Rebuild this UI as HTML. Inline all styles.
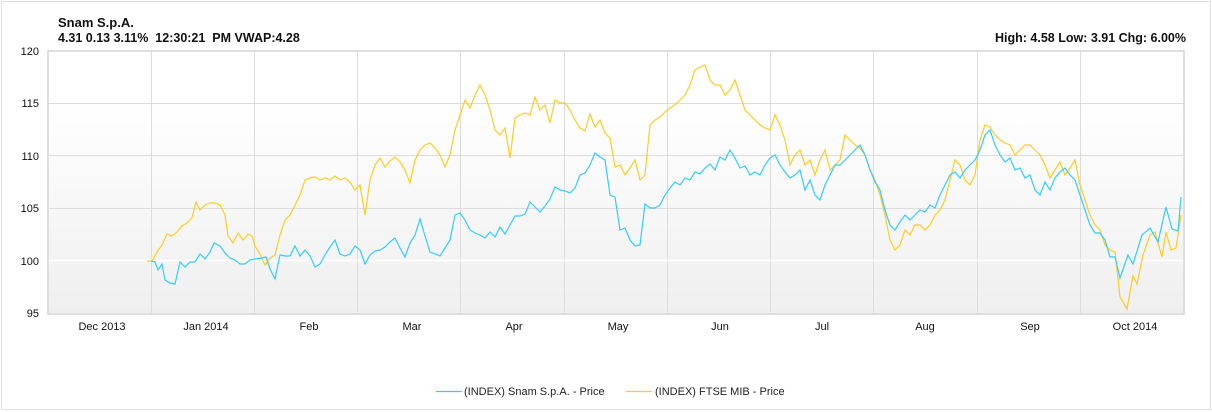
<!DOCTYPE html>
<html><head><meta charset="utf-8"><style>
body{margin:0;background:#fff;font-family:"Liberation Sans",Arial,sans-serif}
svg{display:block}
</style></head><body>
<svg width="1212" height="412" xmlns="http://www.w3.org/2000/svg" font-family="Liberation Sans, Arial, sans-serif">
<defs><linearGradient id="g" x1="0" y1="0" x2="0" y2="1"><stop offset="0" stop-color="#ffffff"/><stop offset="0.2" stop-color="#ffffff"/><stop offset="1" stop-color="#efefef"/></linearGradient></defs>
<rect x="1.5" y="1.5" width="1209" height="408" fill="#fff" stroke="#e2e2e2"/>
<text x="58" y="27" font-size="13" font-weight="bold" fill="#111">Snam S.p.A.</text>
<text x="58" y="42" font-size="12.5" font-weight="bold" fill="#111" style="white-space:pre" xml:space="preserve">4.31 0.13 3.11%  12:30:21  PM VWAP:4.28</text>
<text x="1186" y="42" font-size="12.5" font-weight="bold" fill="#111" text-anchor="end">High: 4.58 Low: 3.91 Chg: 6.00%</text>
<rect x="48" y="51" width="1135" height="262" fill="url(#g)"/>
<g stroke="#dcdcdc" stroke-width="1">
<line x1="48" y1="103.5" x2="1183" y2="103.5"/><line x1="48" y1="155.5" x2="1183" y2="155.5"/><line x1="48" y1="208.5" x2="1183" y2="208.5"/>
<line x1="151.5" y1="51" x2="151.5" y2="313"/><line x1="254.5" y1="51" x2="254.5" y2="313"/><line x1="357.5" y1="51" x2="357.5" y2="313"/><line x1="460.5" y1="51" x2="460.5" y2="313"/><line x1="564.5" y1="51" x2="564.5" y2="313"/><line x1="667.5" y1="51" x2="667.5" y2="313"/><line x1="770.5" y1="51" x2="770.5" y2="313"/><line x1="873.5" y1="51" x2="873.5" y2="313"/><line x1="977.5" y1="51" x2="977.5" y2="313"/><line x1="1080.5" y1="51" x2="1080.5" y2="313"/>
</g>
<line x1="48" y1="260.5" x2="1183" y2="260.5" stroke="#fff" stroke-width="1.5"/>
<g stroke="#dedede" stroke-width="2" fill="none">
<line x1="48" y1="51" x2="1184" y2="51"/><line x1="48" y1="50" x2="48" y2="314"/><line x1="47" y1="314" x2="1185" y2="314"/><line x1="1184" y1="50" x2="1184" y2="314"/>
</g>
<g font-size="11" fill="#111" text-anchor="end">
<text x="39" y="55">120</text><text x="39" y="107">115</text><text x="39" y="160">110</text><text x="39" y="212">105</text><text x="39" y="265">100</text><text x="39" y="317">95</text>
</g>
<g font-size="11" fill="#111" text-anchor="middle">
<text x="102" y="330">Dec 2013</text><text x="206" y="330">Jan 2014</text><text x="309" y="330">Feb</text><text x="412" y="330">Mar</text><text x="514" y="330">Apr</text><text x="618" y="330">May</text><text x="720" y="330">Jun</text><text x="822" y="330">Jul</text><text x="925" y="330">Aug</text><text x="1030" y="330">Sep</text><text x="1135" y="330">Oct 2014</text>
</g>
<polyline fill="none" stroke="#ffcc22" stroke-width="1.2" points="147,261 152,261 157,252 162,245 167,234 172,236 177,232 182,226 187,223 192,218 196,202 200,210 205,205 210,203 215,203 220,205 225,215 228,236 233,243 238,233 243,240 248,234 252,236 255,246 260,254 265,265 270,258 275,255 280,235 285,220 290,215 295,205 300,195 305,180 310,178 315,177 320,180 325,178 330,180 335,176 340,180 345,178 350,182 355,190 360,185 365,215 370,180 375,165 380,158 385,167 390,161 395,157 400,162 405,170 410,183 415,160 420,150 425,145 430,143 435,148 440,155 445,167 450,155 455,130 460,115 465,100 470,108 475,95 480,85 485,95 490,110 495,130 500,135 505,128 510,158 515,118 520,115 525,113 530,115 535,97 540,110 545,105 550,123 555,100 560,103 565,103 570,110 575,120 580,128 585,131 590,114 595,127 600,120 605,133 610,138 615,167 620,165 625,175 630,168 635,160 640,180 645,175 650,125 655,120 660,117 665,112 670,108 675,105 680,100 685,95 690,85 695,70 700,67 705,65 710,80 715,85 720,85 725,95 730,90 735,80 740,95 745,110 750,115 755,120 760,125 765,128 770,130 775,115 780,125 785,140 790,165 795,155 800,150 805,165 810,160 815,175 820,160 825,150 830,170 835,165 840,160 845,135 850,140 855,145 860,148 865,155 870,170 875,180 880,195 885,215 890,240 895,250 900,245 905,230 910,235 915,225 920,225 925,230 930,225 935,215 940,210 945,200 950,180 955,160 960,165 965,180 970,185 975,175 980,140 985,125 990,127 995,135 1000,140 1005,143 1010,145 1015,155 1020,150 1025,145 1030,145 1035,150 1040,155 1045,165 1050,178 1055,170 1060,162 1065,175 1070,168 1075,160 1080,185 1085,200 1090,215 1095,225 1100,230 1105,245 1110,250 1115,252 1120,297 1127,309 1133,276 1137,284 1143,255 1150,235 1155,232 1162,257 1166,232 1171,250 1176,248 1181,215"/>
<polyline fill="none" stroke="#33ccff" stroke-width="1.2" points="151,261 155,262 158,270 162,264 165,280 170,283 175,284 180,262 185,267 190,262 195,262 200,254 205,259 210,252 214,243 220,246 225,253 230,258 235,260 240,264 245,264 250,260 255,259 262,258 266,257 270,269 275,279 280,255 285,256 290,256 295,246 300,256 305,250 310,256 315,267 320,264 325,255 330,247 335,240 340,254 345,256 350,254 355,246 360,250 365,264 370,255 375,251 380,250 385,247 390,242 395,238 400,248 405,257 410,243 415,235 420,219 425,236 430,252 435,254 440,256 445,248 450,240 455,215 460,213 465,220 470,230 475,233 480,235 485,238 490,232 495,237 500,227 505,234 510,225 515,216 520,216 525,214 530,202 535,207 540,212 545,206 550,199 555,187 560,190 565,191 570,193 575,188 580,175 585,173 590,165 595,153 600,157 605,160 610,195 615,197 620,230 625,228 630,240 635,246 640,245 645,204 650,208 655,208 660,205 665,195 670,188 675,182 680,185 685,178 690,180 695,172 700,174 705,168 710,164 715,170 720,157 725,160 730,150 735,158 740,168 745,166 750,175 755,172 760,175 765,165 770,158 775,155 780,165 785,172 790,178 795,175 800,170 805,190 810,180 815,195 820,200 825,185 830,175 835,165 840,165 845,160 850,155 855,150 860,145 865,155 870,170 875,182 880,190 885,210 890,225 895,230 900,222 905,215 910,220 915,215 920,210 925,212 930,205 935,208 940,195 945,185 950,175 955,172 960,178 965,170 970,165 975,160 980,150 985,135 990,130 995,145 1000,155 1005,162 1010,158 1015,170 1020,168 1025,178 1030,175 1035,190 1040,195 1045,182 1050,190 1055,178 1060,172 1065,168 1070,175 1075,180 1080,195 1085,210 1090,225 1095,233 1100,233 1105,240 1110,257 1115,257 1120,278 1128,255 1133,264 1142,235 1150,228 1158,242 1166,207 1172,229 1178,231 1181,197"/>
<line x1="436" y1="391.5" x2="462" y2="391.5" stroke="#33ccff" stroke-width="1.2"/>
<text x="464" y="395" font-size="11" fill="#222">(INDEX) Snam S.p.A. - Price</text>
<line x1="626" y1="391.5" x2="652" y2="391.5" stroke="#ffcc22" stroke-width="1.2"/>
<text x="655" y="395" font-size="11" fill="#222">(INDEX) FTSE MIB - Price</text>
</svg>
</body></html>
